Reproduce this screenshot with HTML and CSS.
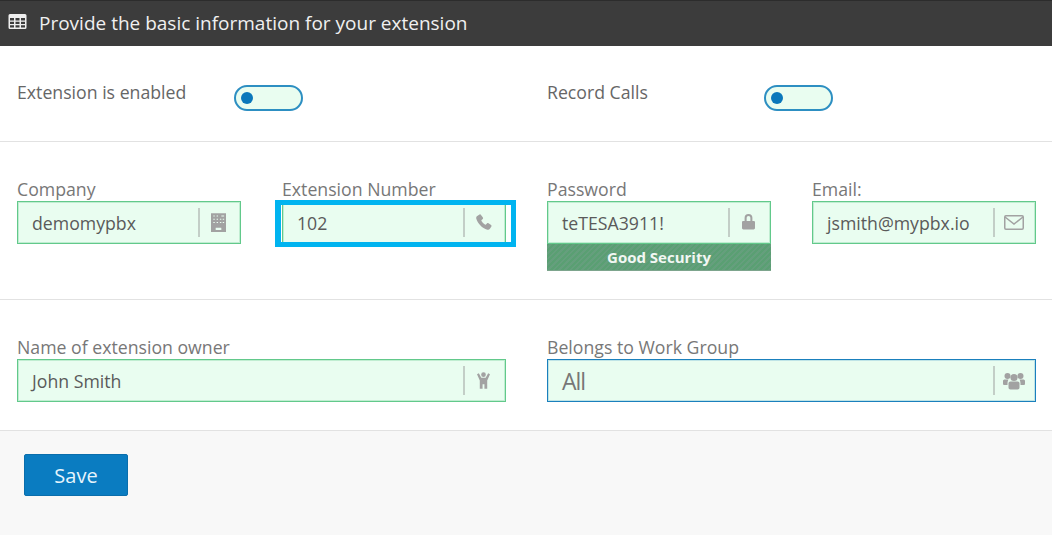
FILE: index.html
```html
<!DOCTYPE html>
<html lang="en">
<head>
<meta charset="utf-8">
<title>Extension</title>
<link rel="stylesheet" href="styles.css">
</head>
<body>
<header class="head">
  <svg class="head-icon" viewBox="0 0 18 15" aria-hidden="true"><path fill-rule="evenodd" d="M1.500 0h15A1.500 1.500 0 0 1 18 1.500v12a1.500 1.500 0 0 1-1.500 1.500h-15A1.500 1.500 0 0 1 0 13.500v-12A1.500 1.500 0 0 1 1.500 0zM1.500 4v2.500h4V4zm5.500 0v2.500h4V4zm5.500 0v2.500h4V4zM1.500 7.700v2.300h4V7.700zm5.500 0v2.300h4V7.700zm5.500 0v2.300h4V7.700zM1.500 11.200v2.300h4v-2.300zm5.500 0v2.300h4v-2.300zm5.500 0v2.300h4v-2.300z"/></svg>
  <span>Provide the basic information for your extension</span>
</header>
<main>
  <section class="row toggles">
    <div class="toggle-field"><span class="toggle-label">Extension is enabled</span><span class="toggle"><i class="knob"></i></span></div>
    <div class="toggle-field"><span class="toggle-label">Record Calls</span><span class="toggle"><i class="knob"></i></span></div>
  </section>
  <section class="row fields">
    <div class="field">
      <label class="label">Company</label>
      <div class="input"><span class="value">demomypbx</span><span class="addon">
        <svg class="icon" viewBox="0 0 16 20"><path fill-rule="evenodd" d="M0 0h16v20H0zM2.500 2.500v1h1.500v-1zm3.500 0v1h1.500v-1zm3.500 0v1h1.500v-1zM2.500 6v1h1.500V6zM6 6v1h1.500V6zm3.500 0v1h1.500V6zm3 0v1H14V6zM2.500 9.500v1h1.500v-1zm3.500 0v1h1.500v-1zm3.500 0v1h1.500v-1zm3 0v1H14v-1zm-3-7v1H14v-1zM5 15.500V18h6v-2.500z"/></svg></span></div>
    </div>
    <div class="field has-mark">
      <label class="label">Extension Number</label>
      <div class="input"><span class="value">102</span><span class="addon">
        <svg class="icon phone" viewBox="0 0 16 16"><path d="M3.600.5 1.200 2C.3 2.600 0 3.700.3 4.700c1.800 5.300 5.700 9.300 11 11 1 .3 2 0 2.600-.9l1.500-2.400c.3-.5.2-1-.3-1.400l-2.600-1.800c-.5-.3-1-.3-1.400.1l-1.100 1.200c-.3.300-.7.300-1.100.100C7.500 9.700 6.300 8.500 5.500 7.100c-.2-.4-.2-.8.100-1.100l1.200-1.100c.4-.4.400-.9.100-1.400L5 .9C4.600.3 4.100.2 3.600.5z"/></svg></span></div>
    </div>
    <div class="field">
      <label class="label">Password</label>
      <div class="input joined"><span class="value">teTESA3911!</span><span class="addon">
        <svg class="icon lock" viewBox="0 0 14 17"><path fill-rule="evenodd" d="M2.800 8V4.500a4.200 4.200 0 0 1 8.400 0V8h1.300C13.400 8 14 8.600 14 9.400v6.200c0 .8-.6 1.400-1.500 1.400h-11C.6 17 0 16.400 0 15.600V9.400C0 8.600.6 8 1.500 8zm2.200 0h4V4.500a2 2 0 0 0-4 0z"/></svg></span></div>
      <div class="strength">Good Security</div>
    </div>
    <div class="field">
      <label class="label">Email:</label>
      <div class="input"><span class="value">jsmith@mypbx.io</span><span class="addon">
        <svg class="icon mail" viewBox="0 0 20 15"><rect x=".75" y=".75" width="18.500" height="13.500" rx="1.200" fill="none" stroke="currentColor" stroke-width="1.500"/><path d="M1 2l9 7 9-7" fill="none" stroke="currentColor" stroke-width="1.500"/></svg></span></div>
    </div>
  </section>
  <section class="row fields owner">
    <div class="field wide">
      <label class="label">Name of extension owner</label>
      <div class="input"><span class="value">John Smith</span><span class="addon">
        <svg class="icon person" viewBox="0 0 14 18"><circle cx="7" cy="2.700" r="2.500"/><path d="M0 2.200 2 1.200 4.600 6h4.800L12 1.200l2 1L11 9v9H8v-5H6v5H3V9z"/></svg></span></div>
    </div>
    <div class="field wide">
      <label class="label">Belongs to Work Group</label>
      <div class="input select"><span class="value">All</span><span class="addon">
        <svg class="icon group" viewBox="0 0 22 17"><circle cx="4.500" cy="3.500" r="3"/><circle cx="17.500" cy="3.500" r="3"/><circle cx="11" cy="5" r="3.600"/><path d="M0 8.500C0 7.500.8 7 2 7h3.500C5 8 4.500 9.500 4.500 11v1.500H1.500C.5 12.500 0 12 0 11zM22 8.500c0-1-.8-1.500-2-1.500h-3.500c.5 1 1 2.500 1 4v1.500h3c1 0 1.500-.5 1.500-1.500z"/><path d="M7.500 9h7c1.300 0 2 .8 2 2v4c0 1.200-.8 2-2 2h-7c-1.200 0-2-.8-2-2v-4c0-1.200.7-2 2-2z"/></svg></span></div>
    </div>
  </section>
  <footer class="foot"><button class="save" type="button">Save</button></footer>
</main>
</body>
</html>
```
FILE: styles.css
```css
*, *::after { box-sizing: border-box; }
html, body { height: 100%; }
body {
  margin: 0;
  display: flex;
  flex-direction: column;
  background: #fff;
  color: #555;
  font-family: "Open Sans", "Liberation Sans", sans-serif;
  overflow: hidden;
}
.head {
  flex: none;
  height: 46px;
  padding: 0 0 2px 8px;
  display: flex;
  align-items: center;
  gap: 12px;
  background: #3c3c3c;
  border-top: 1px solid #2c2c2c;
  color: #f0f0f0;
  font-size: 19px;
}
.head-icon { width: 19px; height: 15px; fill: #efefef; margin-top: -3px; }
main { flex: 1; display: flex; flex-direction: column; }
.row { border-bottom: 1px solid #e2e2e2; }
.toggles {
  height: 96px;
  display: grid;
  grid-template-columns: 530px 1fr;
  padding: 34px 0 0 17px;
}
.toggle-field { display: flex; align-items: flex-start; }
.toggle-label {
  width: 217px;
  font-size: 17.700px;
  line-height: 24px;
  color: #666;
}
.toggle {
  width: 69px;
  height: 26px;
  margin-top: 5px;
  padding: 0 0 0 5px;
  display: flex;
  align-items: center;
  background: #e9fdf0;
  border: 2px solid #2d8fc2;
  border-radius: 13px;
}
.knob { width: 12px; height: 12px; border-radius: 50%; background: #0a78bb; }
.fields {
  display: grid;
  grid-template-columns: repeat(4, 224px);
  column-gap: 41px;
  padding: 36px 0 0 17px;
  height: 158px;
  align-content: start;
}
.owner { height: 131px; padding-top: 36px; }
.wide { grid-column: span 2; width: 489px; }
.field { position: relative; }
.has-mark::after {
  content: "";
  position: absolute;
  left: -7px;
  top: 22px;
  width: 241px;
  height: 47px;
  border: 5px solid #00b4f0;
  border-left-width: 6px;
  pointer-events: none;
}
.label {
  display: block;
  height: 23px;
  font-size: 17.700px;
  line-height: 23px;
  color: #777;
}
.input {
  height: 43px;
  display: flex;
  align-items: center;
  justify-content: space-between;
  padding: 0 0 0 14px;
  background: #e9fdf0;
  border: 1px solid #62c98b;
  box-shadow: inset 0 0 0 1px rgba(98, 201, 139, .3);
  font-size: 17.700px;
  color: #5a5a5a;
}
.addon {
  width: 42px;
  height: 29px;
  padding-right: 3px;
  display: flex;
  align-items: center;
  justify-content: center;
  border-left: 2px solid #c3cec7;
}
.icon { width: 15px; height: 19px; fill: #a2a2a2; color: #a2a2a2; }
.phone { width: 16px; height: 16px; margin-top: -2px; }
.lock { width: 13px; height: 17px; margin-top: -3px; }
.person { width: 13px; height: 17px; }
.mail { width: 20px; height: 15px; }
.group { width: 22px; height: 18px; }
.strength {
  height: 27px;
  text-align: center;
  font-size: 15px;
  line-height: 27px;
  font-weight: 700;
  color: #f2f7f3;
  background: repeating-linear-gradient(135deg, #5a9f73 0 2px, #659f7d 2px 4px);
  border-bottom: 1px solid #7da58d;
}
.select {
  border-color: #1a80bd;
  box-shadow: inset 0 0 0 1px rgba(26, 128, 189, .2);
  font-size: 23px;
  letter-spacing: -1px;
  color: #777;
}
.foot {
  flex: 1;
  padding: 23px 0 0 24px;
  background: #f8f8f8;
}
.save {
  width: 104px;
  height: 42px;
  padding: 0;
  font-family: inherit;
  font-size: 20px;
  color: #e6f4fc;
  background: #0a7cc1;
  border: 1px solid #0a6eac;
  border-radius: 2px;
}
```
